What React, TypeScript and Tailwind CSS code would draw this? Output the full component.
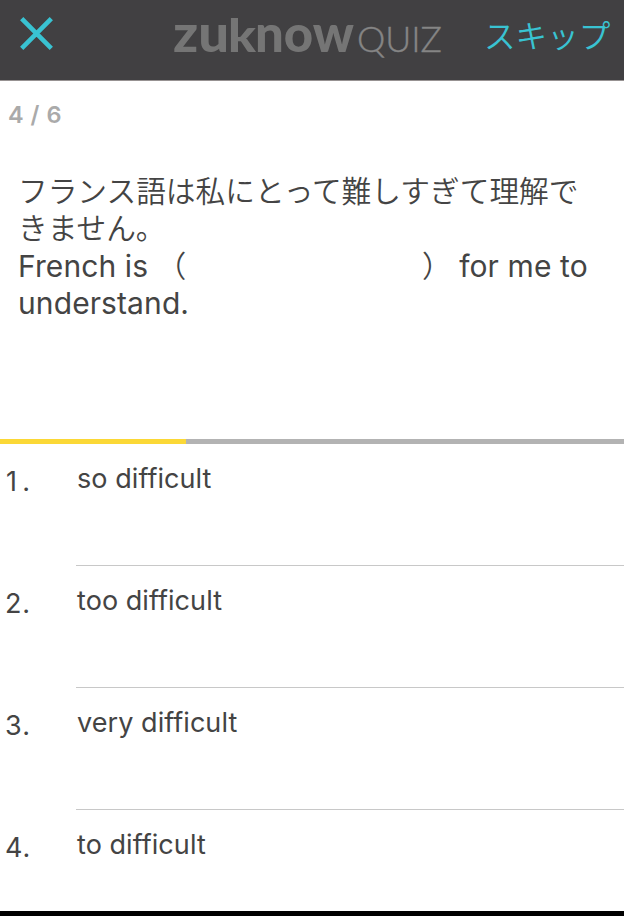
const ANSWERS = ["so difficult", "too difficult", "very difficult", "to difficult"];

function Logo() {
  return (
    <svg
      role="img"
      aria-label="zuknow QUIZ"
      className="ml-[120px] h-[70px] w-[270px] shrink-0 overflow-visible"
      viewBox="0 0 270 70"
    >
      <g className="fill-[#757575] font-['Lato',sans-serif] text-[51px] font-black">
        <text x="-1" y="47" textLength="56" lengthAdjust="spacingAndGlyphs">
          zu
        </text>
        <text x="54" y="47" textLength="28" lengthAdjust="spacingAndGlyphs" className="text-[45px]">
          k
        </text>
        <text x="81" y="47" textLength="99" lengthAdjust="spacingAndGlyphs">
          now
        </text>
      </g>
      <text
        x="183"
        y="47"
        textLength="85"
        lengthAdjust="spacingAndGlyphs"
        className="fill-[#858585] stroke-[#858585] font-['Lato',sans-serif] text-[36px] font-light"
        strokeWidth="0.4"
      >
        QUIZ
      </text>
    </svg>
  );
}

function Header() {
  return (
    <header className="flex h-[81px] shrink-0 items-start border-b border-[#979292] bg-[#414042] pt-[5px]">
      <button type="button" aria-label="Close" className="mt-[11px] ml-[19px] size-[35px] shrink-0">
        <svg viewBox="0 0 35 35" className="size-full stroke-[#39c3d2]" strokeWidth="4.6">
          <path d="M2.7 2.7 32.3 32.3M32.3 2.7 2.7 32.3" />
        </svg>
      </button>
      <Logo />
      <button
        type="button"
        className="mt-[9px] ml-[40px] text-[31.6px] leading-[46px] font-[350] whitespace-nowrap text-[#39c3d2]"
      >
        スキップ
      </button>
    </header>
  );
}

function Question() {
  return (
    <div className="mt-[43px] flex flex-col pl-[18px] text-[30px] leading-[37.4px] whitespace-pre text-[#444]">
      <p className="text-[29.7px] font-[350]">フランス語は私にとって難しすぎて理解で</p>
      <p className="text-[29.7px] font-[350]">きません。</p>
      <p className="flex tracking-[0.1px]">
        <span>French is</span>
        <span className="flex w-[311px] justify-between pr-[7px] pl-[8px] font-[350]">
          <span>（</span>
          <span>）</span>
        </span>
        <span>for me to</span>
      </p>
      <p className="tracking-[0.1px]">understand.</p>
    </div>
  );
}

interface AnswerRowProps {
  number: number;
  label: string;
}

function AnswerRow({ number, label }: AnswerRowProps) {
  return (
    <li className="group flex h-[122px] text-[27px] leading-[34px] text-[#444]">
      <span className="mr-[46px] flex w-[30px] shrink-0 justify-between pt-[21px] pl-[5px]">
        <span className="group-first:pl-px">{number}</span>
        <span>.</span>
      </span>
      <span className="flex-1 border-b border-[#c8c8c8] pt-[18px] pl-px tracking-[0.06px] group-last:border-b-0">
        {label}
      </span>
    </li>
  );
}

export default function App() {
  return (
    <main
      lang="ja"
      className="flex h-[916px] w-[624px] flex-col overflow-hidden border-b-[5px] border-black bg-white font-['Inter','Noto_Sans_CJK_JP',sans-serif]"
    >
      <Header />
      <section className="flex h-[358px] shrink-0 flex-col">
        <p className="pt-[19px] pl-[8px] text-[23.5px] leading-[30px] font-semibold tracking-[0.5px] text-[#aaa]">4 / 6</p>
        <Question />
      </section>
      <div className="h-[5px] shrink-0 bg-[#b3b3b3]">
        <div className="h-full w-[186px] bg-[#fbd836]" />
      </div>
      <ol>
        {ANSWERS.map((label, i) => (
          <AnswerRow key={label} number={i + 1} label={label} />
        ))}
      </ol>
    </main>
  );
}
